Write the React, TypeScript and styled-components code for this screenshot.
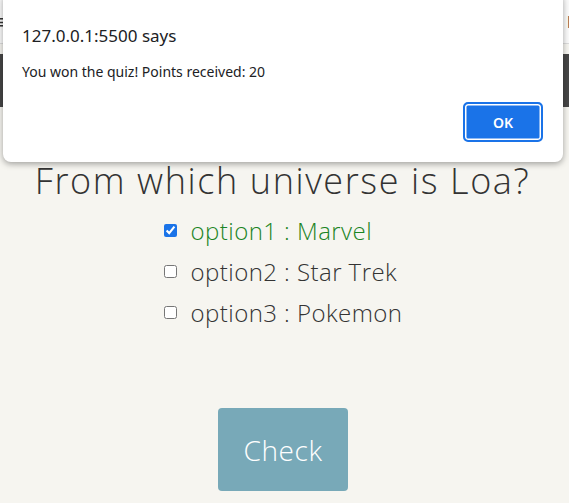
import React from "react";
import styled, { createGlobalStyle } from "styled-components";

const GlobalStyle = createGlobalStyle`
  html, body { margin: 0; padding: 0; }
  body { background: #f6f5f0; font-family: "Open Sans", sans-serif; overflow: hidden; }
`;

const Page = styled.div`
  position: relative;
  width: 569px;
  height: 503px;
  background: #f6f5f0;
`;

const NavBar = styled.nav`
  height: 44px;
  background: #fafafa;
  border-bottom: 1px solid #dcdcdc;
  display: flex;
  align-items: center;
  justify-content: space-between;
  box-sizing: border-box;
`;

const Burger = styled.span`
  font-size: 20px;
  color: #333;
  margin-left: -4px;
`;

const NavLink = styled.span`
  font-family: "Open Sans", sans-serif;
  font-size: 16px;
  color: #444;
  margin-right: -6px;
`;

const Banner = styled.div`
  margin-top: 10px;
  height: 53px;
  background: #464646;
`;

const Quiz = styled.section`
  display: flex;
  flex-direction: column;
  align-items: center;
  padding: 52px 3px 0 0;
  color: #333;
`;

const Question = styled.h1`
  margin: 0 0 0 -1px;
  font-family: "Open Sans", sans-serif;
  font-weight: 300;
  font-size: 36px;
  line-height: 44px;
  letter-spacing: 1.6px;
  color: #333;
`;

const Options = styled.div`
  display: flex;
  flex-direction: column;
  align-items: flex-start;
  margin-top: 14px;
  gap: 15px;
`;

const Row = styled.label<{ $correct?: boolean }>`
  display: flex;
  align-items: center;
  gap: 14px;
  height: 26px;
  font-family: "Open Sans", sans-serif;
  font-weight: 300;
  font-size: 24px;
  letter-spacing: 0.45px;
  color: ${(p) => (p.$correct ? "#1b8424" : "#333")};
`;

const Box = styled.input`
  margin: 0;
  width: 13px;
  height: 13px;
  accent-color: #1a73e8;
`;

const CheckButton = styled.button`
  margin-top: 83px;
  width: 130px;
  height: 83px;
  border: none;
  border-radius: 4px;
  background: #78a9b8;
  color: #fff;
  font-family: "Open Sans", sans-serif;
  font-weight: 300;
  font-size: 28px;
  letter-spacing: 0.6px;
`;

const Dialog = styled.div`
  position: absolute;
  left: 3px;
  top: -8px;
  width: 560px;
  height: 170px;
  background: #fff;
  border-radius: 8px;
  box-shadow: 0 2px 6px rgba(0, 0, 0, 0.35);
  box-sizing: border-box;
  padding: 33px 20px 0 19px;
  display: flex;
  flex-direction: column;
  font-family: "Noto Sans", "Open Sans", sans-serif;
`;

const DialogTitle = styled.div`
  font-size: 17px;
  line-height: 22px;
  color: #202124;
`;

const DialogMessage = styled.div`
  margin-top: 16px;
  font-size: 14px;
  line-height: 18px;
  color: #202124;
`;

const DialogActions = styled.div`
  display: flex;
  justify-content: flex-end;
  margin-top: 21px;
`;

const OkButton = styled.button`
  width: 80px;
  height: 40px;
  border-radius: 5px;
  background: #1a73e8;
  border: 2px solid #1a73e8;
  box-shadow: inset 0 0 0 1.5px #fff;
  color: #fff;
  font-family: "Noto Sans", sans-serif;
  font-weight: 600;
  font-size: 14px;
`;

export default function App() {
  return (
    <>
      <GlobalStyle />
      <Page>
        <NavBar>
          <Burger>≡</Burger>
          <NavLink>li</NavLink>
        </NavBar>
        <Banner />
        <Quiz>
          <Question>From which universe is Loa?</Question>
          <Options>
            <Row $correct>
              <Box type="checkbox" defaultChecked />
              option1 : Marvel
            </Row>
            <Row>
              <Box type="checkbox" />
              option2 : Star Trek
            </Row>
            <Row>
              <Box type="checkbox" />
              option3 : Pokemon
            </Row>
          </Options>
          <CheckButton>Check</CheckButton>
        </Quiz>
        <Dialog>
          <DialogTitle>127.0.0.1:5500 says</DialogTitle>
          <DialogMessage>You won the quiz! Points received: 20</DialogMessage>
          <DialogActions>
            <OkButton>OK</OkButton>
          </DialogActions>
        </Dialog>
      </Page>
    </>
  );
}
